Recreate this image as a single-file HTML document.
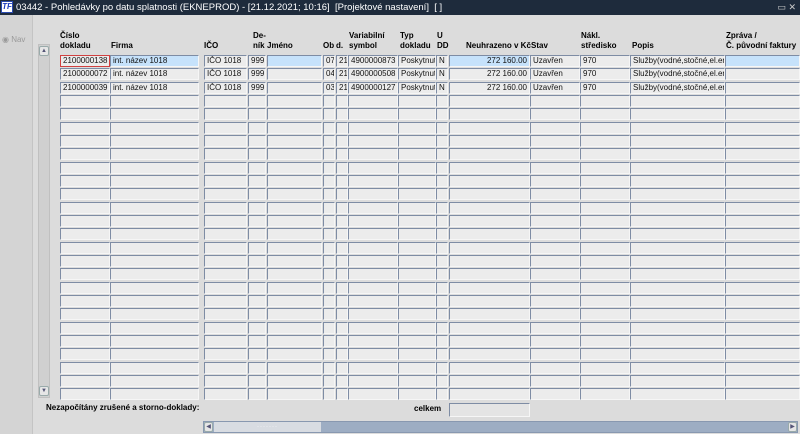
<!DOCTYPE html>
<html><head><meta charset="utf-8">
<style>
*{margin:0;padding:0;box-sizing:border-box}
body{width:800px;height:434px;overflow:hidden;background:#dcdcdc;font-family:"Liberation Sans",Arial,sans-serif;font-size:8px;color:#000;position:relative}
#title{position:absolute;left:0;top:0;width:800px;height:15px;background:#1e2b3c;color:#fff;font-size:9.5px;line-height:15px;padding-left:16px;white-space:nowrap}
#logo{position:absolute;left:1px;top:1px;width:12px;height:12px;background:#fff;border:1px solid #2a4ab0;color:#1a3cc0;font-size:8px;font-weight:bold;font-style:italic;line-height:10px;text-align:center}
#wc{position:absolute;right:4px;top:0;color:#ccc;font-size:9px}
#left{position:absolute;left:0;top:15px;width:33px;height:419px;background:#d4d4d4;border-right:1px solid #c4c4c4}
#nav{position:absolute;left:2px;top:20px;color:#9a9a9a;font-size:8px}
.h{position:absolute;font-weight:bold;font-size:8px;line-height:10px;white-space:nowrap}
.c{position:absolute;height:12px;background:#ececec;border-top:1px solid #7e8ca4;border-left:1px solid #7e8ca4;border-right:1px solid #f6f6f6;border-bottom:1px solid #f6f6f6;font-size:8px;line-height:10px;padding-left:2px;white-space:nowrap;overflow:hidden;color:#111}
.b{background:#c6e2fb}
.r{text-align:right;padding-right:2px}
#vs{position:absolute;left:38px;top:44px;width:12px;height:354px;background:#d0d0d0;border:1px solid #c0c0c0}
.arr{position:absolute;left:0;width:10px;height:10px;background:#e6e6e6;border:1px solid #9aa;border-radius:2px;font-size:6px;text-align:center;line-height:8px;color:#557}
#hs{position:absolute;left:203px;top:421px;width:595px;height:12px;background:#9dadc3;border:1px solid #8898b0}
#thumb{position:absolute;left:10px;top:0;width:107px;height:10px;background:#d8dce2;color:#fff;font-size:6px;text-align:center;line-height:10px;letter-spacing:1px}
</style></head><body>
<div id="title"><div id="logo">TF</div>03442 - Pohledávky po datu splatnosti (EKNEPROD) - [21.12.2021; 10:16]&nbsp; [Projektové nastavení]&nbsp; [ ]<span id="wc">▭ ✕</span></div>
<div id="left"><div id="nav">◉ Nav</div></div>
<div id="vs"><div class="arr" style="top:1px">▲</div><div class="arr" style="bottom:1px">▼</div></div>

<div class="h" style="left:60px;top:31px">Číslo<br>dokladu</div>
<div class="h" style="left:111px;top:41px">Firma</div>
<div class="h" style="left:204px;top:41px">IČO</div>
<div class="h" style="left:253px;top:31px">De-<br>ník</div>
<div class="h" style="left:267px;top:41px">Jméno</div>
<div class="h" style="left:323px;top:41px">Ob</div>
<div class="h" style="left:336px;top:41px">d.</div>
<div class="h" style="left:349px;top:31px">Variabilní<br>symbol</div>
<div class="h" style="left:400px;top:31px">Typ<br>dokladu</div>
<div class="h" style="left:437px;top:31px">U<br>DD</div>
<div class="h" style="left:466px;top:41px">Neuhrazeno v Kč</div>
<div class="h" style="left:531px;top:41px">Stav</div>
<div class="h" style="left:581px;top:31px">Nákl.<br>středisko</div>
<div class="h" style="left:632px;top:41px">Popis</div>
<div class="h" style="left:726px;top:31px">Zpráva /<br>Č. původní faktury</div>

<div id="grid"></div>

<div class="h" style="left:46px;top:403px">Nezapočítány zrušené a storno-doklady:</div>
<div class="h" style="left:414px;top:404px">celkem</div>
<div class="c" style="left:449px;top:403px;width:81px;height:14px;background:#e4e4e4"></div>
<div id="hs"><div class="arr" style="top:0;left:0;width:9px">◀</div><div id="thumb">·······</div><div class="arr" style="top:0;left:auto;right:0;width:9px">▶</div></div>

<script>
var cols=[[60,50],[110,89],[204,43],[248,18],[267,55],[323,12],[336,12],[348,50],[398,38],[436,12],[449,81],[530,50],[580,50],[630,95],[725,75]];
var data=[
["2100000138","int. název 1018","IČO 1018","999","","07","21","4900000873","Poskytnutí","N","272 160.00","Uzavřen","970","Služby(vodné,stočné,el.en",""],
["2100000072","int. název 1018","IČO 1018","999","","04","21","4900000508","Poskytnutí","N","272 160.00","Uzavřen","970","Služby(vodné,stočné,el.en",""],
["2100000039","int. název 1018","IČO 1018","999","","03","21","4900000127","Poskytnutí","N","272 160.00","Uzavřen","970","Služby(vodné,stočné,el.en",""]];
var h="";
for(var r=0;r<26;r++){var y=Math.round(55+r*13.33);
for(var i=0;i<cols.length;i++){var cl="c";var st="";
if(r==0&&(i==1||i==4||i==10||i==14))cl+=" b";
if(r==0&&i==0)st="border:1px solid #d04040;background:#ececec;";
if(i==0||i==10)cl+=" r";
var t=(r<3)?data[r][i]:"";
h+='<div class="'+cl+'" style="'+st+'left:'+cols[i][0]+'px;top:'+y+'px;width:'+cols[i][1]+'px">'+t+'</div>';}}
document.getElementById("grid").innerHTML=h;
</script>
</body></html>
